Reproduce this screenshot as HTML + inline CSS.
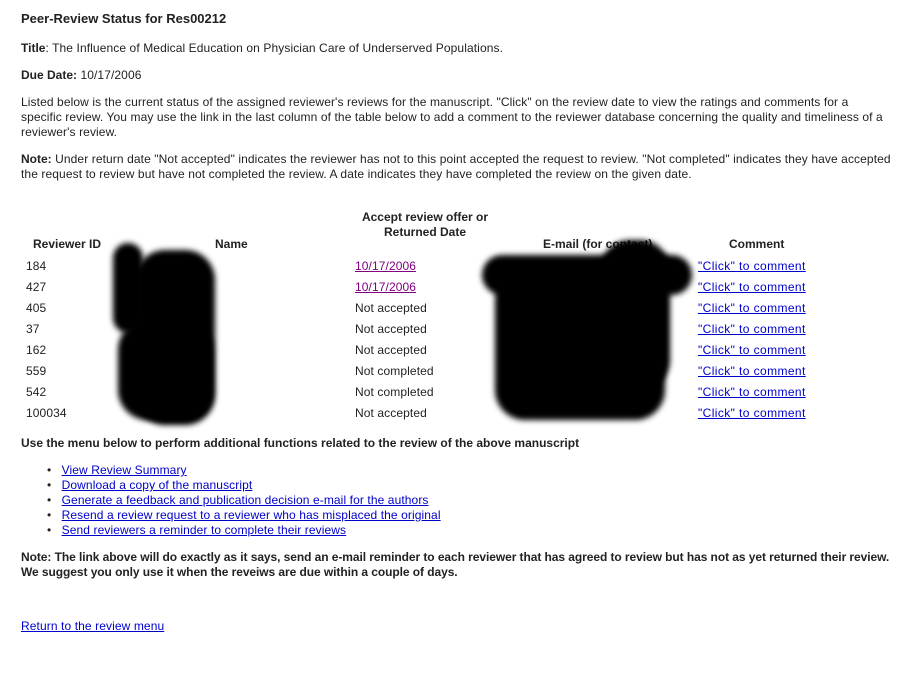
<!DOCTYPE html>
<html><head><style>
body{margin:0;width:913px;height:676px;background:#fff;font-family:"Liberation Sans",Arial,sans-serif;font-size:12px;color:#222;position:relative;overflow:hidden}
.a{position:absolute;white-space:nowrap;line-height:15px;letter-spacing:0.1px}
b{color:#222;letter-spacing:0}
.bd{font-weight:bold;letter-spacing:0}
a{color:#00c;text-decoration:underline}
a.v{color:#800080}
.blob{position:absolute;background:#000;filter:blur(3px)}
</style></head><body>
<div class="a bd" style="left:21px;top:11px;font-size:13px">Peer-Review Status for Res00212</div>
<div class="a" style="left:21px;top:41px"><b>Title</b>: The Influence of Medical Education on Physician Care of Underserved Populations.</div>
<div class="a" style="left:21px;top:68px"><b>Due Date:</b> 10/17/2006</div>
<div class="a" style="left:21px;top:95px;white-space:normal;width:870px">Listed below is the current status of the assigned reviewer's reviews for the manuscript. "Click" on the review date to view the ratings and comments for a specific review. You may use the link in the last column of the table below to add a comment to the reviewer database concerning the quality and timeliness of a reviewer's review.</div>
<div class="a" style="left:21px;top:152px;white-space:normal;width:870px"><b>Note:</b> Under return date "Not accepted" indicates the reviewer has not to this point accepted the request to review. "Not completed" indicates they have accepted the request to review but have not completed the review. A date indicates they have completed the review on the given date.</div>

<div class="a bd" style="left:335px;top:210px;width:180px;text-align:center">Accept review offer or<br>Returned Date</div>
<div class="a bd" style="left:33px;top:237px">Reviewer ID</div>
<div class="a bd" style="left:215px;top:237px">Name</div>
<div class="a bd" style="left:543px;top:237px">E-mail (for contact)</div>
<div class="a bd" style="left:729px;top:237px">Comment</div>

<div class="a" style="left:26px;top:256px;line-height:21px">184<br>427<br>405<br>37<br>162<br>559<br>542<br>100034</div>
<div class="a" style="left:355px;top:256px;line-height:21px"><a class="v" href="#">10/17/2006</a><br><a class="v" href="#">10/17/2006</a><br>Not accepted<br>Not accepted<br>Not accepted<br>Not completed<br>Not completed<br>Not accepted</div>
<div class="a" style="left:698px;top:256px;line-height:21px;letter-spacing:0.4px"><a href="#">"Click" to comment</a><br><a href="#">"Click" to comment</a><br><a href="#">"Click" to comment</a><br><a href="#">"Click" to comment</a><br><a href="#">"Click" to comment</a><br><a href="#">"Click" to comment</a><br><a href="#">"Click" to comment</a><br><a href="#">"Click" to comment</a></div>

<div class="blob" style="left:113px;top:243px;width:30px;height:90px;border-radius:15px"></div>
<div class="blob" style="left:135px;top:250px;width:80px;height:175px;border-radius:30px"></div>
<div class="blob" style="left:118px;top:320px;width:95px;height:100px;border-radius:30px"></div>
<div class="blob" style="left:482px;top:255px;width:210px;height:40px;border-radius:20px"></div>
<div class="blob" style="left:495px;top:270px;width:170px;height:150px;border-radius:30px"></div>
<div class="blob" style="left:600px;top:240px;width:70px;height:150px;border-radius:30px"></div>

<div class="a bd" style="left:21px;top:436px">Use the menu below to perform additional functions related to the review of the above manuscript</div>
<div class="a" style="left:47px;top:463px">
&bull;&nbsp;&nbsp;&nbsp;<a href="#">View Review Summary</a><br>
&bull;&nbsp;&nbsp;&nbsp;<a href="#">Download a copy of the manuscript</a><br>
&bull;&nbsp;&nbsp;&nbsp;<a href="#">Generate a feedback and publication decision e-mail for the authors</a><br>
&bull;&nbsp;&nbsp;&nbsp;<a href="#">Resend a review request to a reviewer who has misplaced the original</a><br>
&bull;&nbsp;&nbsp;&nbsp;<a href="#">Send reviewers a reminder to complete their reviews</a></div>
<div class="a bd" style="left:21px;top:550px;white-space:normal;width:875px;letter-spacing:-0.07px">Note: The link above will do exactly as it says, send an e-mail reminder to each reviewer that has agreed to review but has not as yet returned their review. We suggest you only use it when the reveiws are due within a couple of days.</div>
<div class="a" style="left:21px;top:619px"><a href="#">Return to the review menu</a></div>
</body></html>
